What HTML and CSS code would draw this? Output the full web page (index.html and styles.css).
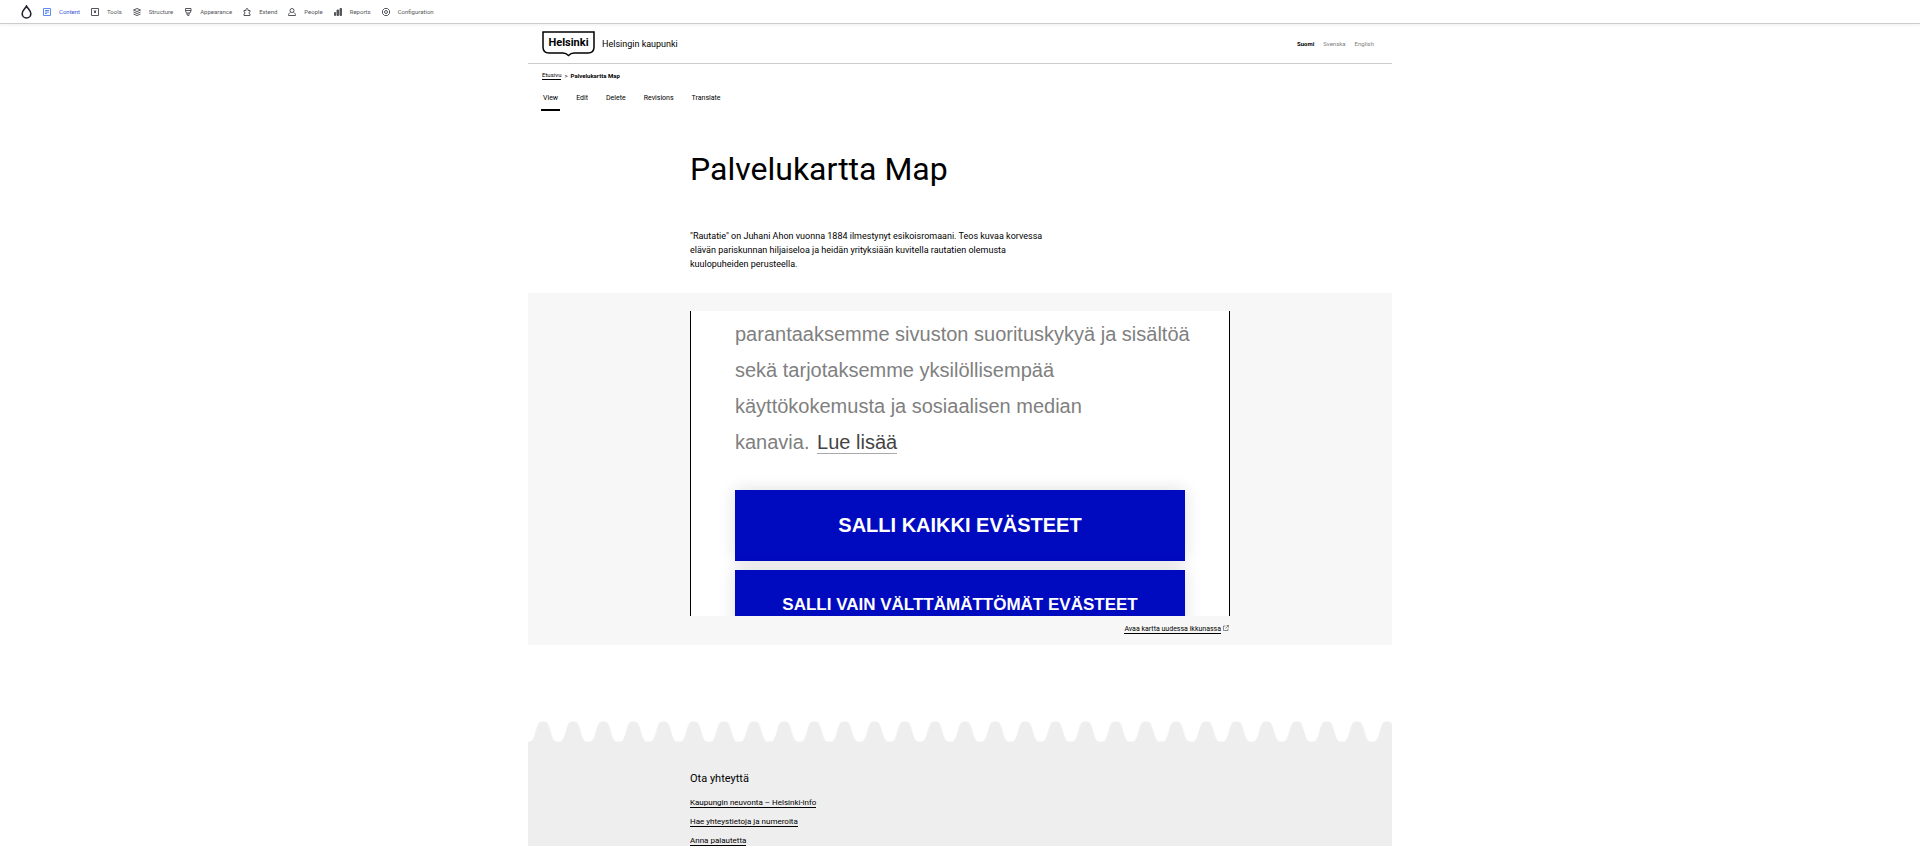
FILE: index.html
```html
<!DOCTYPE html>
<html lang="fi">
<head>
<meta charset="utf-8">
<title>Palvelukartta Map | Helsingin kaupunki</title>
<link rel="stylesheet" href="styles.css">
</head>
<body>
<nav class="toolbar" aria-label="Administration">
  <a class="toolbar-home" href="#" aria-label="Home"><svg viewBox="0 0 10 13"><path d="M5 1C4 3.200 1 5 1 8.100a4 4 0 0 0 8 0C9 5 6 3.200 5 1z" fill="none" stroke="#222330" stroke-width="1.500"/></svg></a>
  <a class="tool active" href="#"><svg viewBox="0 0 16 16"><path d="M1 1h14v14H1zM4 5h8M4 8h8M4 11h4"/></svg>Content</a>
  <a class="tool" href="#"><svg viewBox="0 0 16 16"><path d="M1 1h14v14H1z"/><path d="M7 6h2v3H7zM6 5l4 5M10 5l-4 5"/></svg>Tools</a>
  <a class="tool" href="#"><svg viewBox="0 0 16 16"><path d="M8 1l7 3-7 3-7-3zM1 8l7 3 7-3M1 12l7 3 7-3"/></svg>Structure</a>
  <a class="tool" href="#"><svg viewBox="0 0 16 16"><path d="M3 1h11v5l-2 4H5L3 6zM3 5h11M6 10v4l4 1v-5"/></svg>Appearance</a>
  <a class="tool" href="#"><svg viewBox="0 0 16 16"><path d="M2 5h4V3a2 2 0 0 1 4 0v2h4v3a2 2 0 0 0 0 4v3H2v-3a2 2 0 0 0 0-4z"/></svg>Extend</a>
  <a class="tool" href="#"><svg viewBox="0 0 16 16"><circle cx="8" cy="5" r="4"/><path d="M5 9c-3 1-4 3-4 6h14c0-3-1-5-4-6"/></svg>People</a>
  <a class="tool" href="#"><svg viewBox="0 0 16 16"><path d="M1 9h2v6H1zM6 4h3v11H6zM12 1h3v14h-3z" fill="#55565b"/></svg>Reports</a>
  <a class="tool" href="#"><svg viewBox="0 0 16 16"><path d="M5 1h6l4 4v6l-4 4H5l-4-4V5z"/><circle cx="8" cy="8" r="3"/></svg>Configuration</a>
</nav>

<div class="page">
  <header class="header">
    <a class="brand" href="#">
      <span class="logo"><svg viewBox="0 0 53 26" aria-hidden="true"><path d="M1 1h51v15c0 4-2 6-6 6H32c-3 0-4 1-5.500 2.500C25 23 24 22 21 22H7c-4 0-6-2-6-6z" fill="#fff" stroke="#000" stroke-width="1.500"/></svg><b>Helsinki</b></span>
      Helsingin kaupunki
    </a>
    <nav class="languages" aria-label="Kieli"><a class="current" href="#">Suomi</a><a href="#">Svenska</a><a href="#">English</a></nav>
  </header>
  <nav class="breadcrumb" aria-label="Murupolku"><a href="#">Etusivu</a><span>&gt;</span><b>Palvelukartta Map</b></nav>
  <nav class="tabs" aria-label="Tabs"><a class="current" href="#">View</a><a href="#">Edit</a><a href="#">Delete</a><a href="#">Revisions</a><a href="#">Translate</a></nav>

  <main>
    <div class="content">
      <h1>Palvelukartta Map</h1>
      <p class="lead">"Rautatie" on Juhani Ahon vuonna 1884 ilmestynyt esikoisromaani. Teos kuvaa korvessa<br>elävän pariskunnan hiljaiseloa ja heidän yrityksiään kuvitella rautatien olemusta<br>kuulopuheiden perusteella.</p>
    </div>
    <section class="map" aria-label="Kartta">
      <div class="content">
        <div class="frame">
          <p>parantaaksemme sivuston suorituskykyä ja sisältöä<br>sekä tarjotaksemme yksilöllisempää<br>käyttökokemusta ja sosiaalisen median<br>kanavia. <a href="#">Lue lisää</a></p>
          <button type="button" class="consent">SALLI KAIKKI EVÄSTEET</button>
          <button type="button" class="consent small">SALLI VAIN VÄLTTÄMÄTTÖMÄT EVÄSTEET</button>
        </div>
        <div class="open-map"><a href="#">Avaa kartta uudessa ikkunassa</a><svg viewBox="0 0 12 12" aria-hidden="true"><path d="M5 2H1v9h9V7M7 1h4v4M11 1L5 7"/></svg></div>
      </div>
    </section>
  </main>

  <footer>
    <svg class="wave" aria-hidden="true">
      <defs><pattern id="wave" width="106" height="80" patternUnits="userSpaceOnUse" patternTransform="scale(.2844)"><path d="M0 72H4C17 72 20 58 26.500 37S36 2 49 2H57C70 2 73 16 79.500 37S89 72 102 72H106V80H0z" fill="#eee"/></pattern></defs>
      <rect width="100%" height="100%" fill="url(#wave)"/>
    </svg>
    <div class="footer-body">
      <div class="content">
        <h2>Ota yhteyttä</h2>
        <ul>
          <li><a href="#">Kaupungin neuvonta – Helsinki-info</a></li>
          <li><a href="#">Hae yhteystietoja ja numeroita</a></li>
          <li><a href="#">Anna palautetta</a></li>
        </ul>
      </div>
    </div>
  </footer>
</div>
</body>
</html>
```
FILE: styles.css
```css
* { box-sizing: border-box; }
body {
  margin: 0;
  min-height: 100vh;
  display: flex;
  flex-direction: column;
  background: #fff;
  color: #000;
  font-family: Roboto, "Liberation Sans", sans-serif;
}
a { color: inherit; text-decoration: none; }
h1, h2, p, ul { margin: 0; padding: 0; }

.toolbar {
  display: flex;
  align-items: center;
  gap: 11px;
  height: 24px;
  padding: 0 21px;
  border-bottom: 1px solid #ccc;
  box-shadow: 0 1px 3px #0001;
  font-size: 6px;
  line-height: 8px;
  color: #55565b;
}
.toolbar-home svg { display: block; width: 11px; height: 14px; }
.tool { display: flex; align-items: center; gap: 8px; }
.tool svg { width: 8px; height: 8px; fill: none; stroke: #55565b; stroke-width: 2; }
.tool.active { color: #3a55d4; }
.tool.active svg { stroke: #5b8def; }

.page {
  width: 100%;
  max-width: 864px;
  margin: 0 auto;
  flex: 1;
  display: flex;
  flex-direction: column;
}
.content { max-width: 540px; margin: 0 auto; }

.header {
  display: flex;
  align-items: center;
  justify-content: space-between;
  height: 40px;
  padding: 0 18px 0 14px;
  border-bottom: 1px solid #ccc;
}
.brand { display: flex; align-items: center; gap: 7px; font-size: 9px; }
.logo { display: grid; width: 53px; }
.logo svg, .logo b { grid-area: 1 / 1; }
.logo svg { display: block; width: 100%; }
.logo b { padding-top: 5px; text-align: center; font-size: 11px; line-height: 13px; }
.languages { display: flex; gap: 9px; font-size: 6px; color: #808080; }
.languages .current { color: #000; font-weight: 700; }

.breadcrumb { display: flex; gap: 3px; padding: 7px 14px 0; font-size: 6px; line-height: 9px; }
.breadcrumb a { border-bottom: 1px solid #000; line-height: 8px; }
.tabs { display: flex; gap: 14px; padding: 10px 13px 0; font-size: 7px; line-height: 16px; }
.tabs a { padding: 0 2px 3px; border-bottom: 2px solid transparent; }
.tabs .current { border-color: #000; }

h1 { padding-top: 38px; font-size: 32px; font-weight: 400; line-height: 40px; }
.lead { padding-top: 40px; font-size: 9px; line-height: 14px; }

.map { margin-top: 22px; padding-top: 18px; background: #f7f7f7; }
.frame {
  height: 305px;
  overflow: hidden;
  padding: 5px 44px 0;
  border: solid #000;
  border-width: 0 1px;
  background: #fff;
  font-family: "Liberation Sans", Arial, sans-serif;
}
.frame p { margin-bottom: 30px; font-size: 20px; line-height: 36px; color: #808080; white-space: nowrap; }
.frame p a { margin-left: 2px; border-bottom: 1px solid #aaa; color: #444; }
.consent {
  display: block;
  width: 100%;
  height: 71px;
  margin: 0 0 9px;
  padding: 0 0 2px;
  border: 0;
  background: #000abf;
  box-shadow: 0 0 16px #0002;
  color: #fff;
  font: 700 20px/24px "Liberation Sans", Arial, sans-serif;
}
.consent.small { font-size: 17px; }
.open-map {
  display: flex;
  justify-content: flex-end;
  gap: 2px;
  padding: 9px 1px 11px;
  font-size: 7px;
  line-height: 8px;
}
.open-map a { border-bottom: 1px solid #000; }
.open-map svg { width: 6px; height: 6px; fill: none; stroke: #222; stroke-width: 1; }

footer { margin-top: 76px; flex: 1; display: flex; flex-direction: column; }
.wave { display: block; width: 100%; height: 21px; }
.footer-body { flex: 1; padding-top: 29px; background: #eee; }
.footer-body .content { width: 100%; }
h2 { font-size: 11px; font-weight: 400; line-height: 16px; }
footer ul { list-style: none; padding-top: 6px; font-size: 8px; line-height: 19px; }
footer li { height: 19px; }
footer li a { border-bottom: 1px solid #000; }
```
